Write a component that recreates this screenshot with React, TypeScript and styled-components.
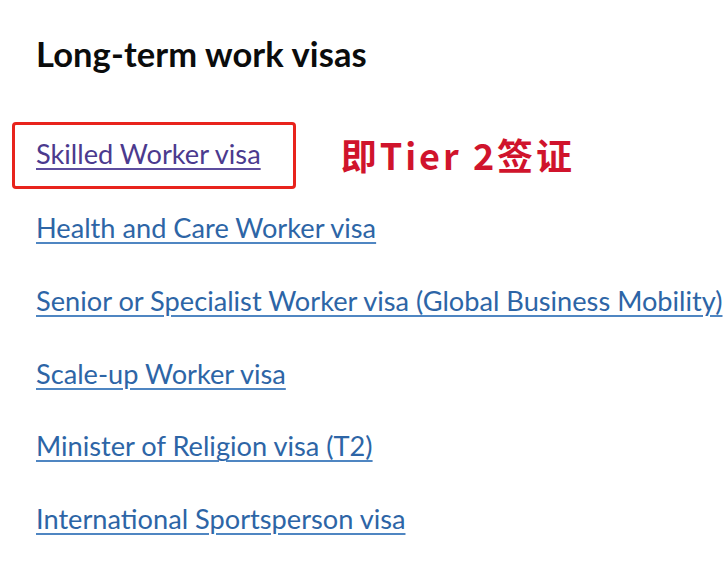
import React from "react";
import styled, { createGlobalStyle } from "styled-components";

const GlobalStyle = createGlobalStyle`
  html, body { margin: 0; padding: 0; background: #ffffff; }
  body { font-family: "Lato", "Liberation Sans", sans-serif; }
`;

const Page = styled.main`
  padding: 33px 0 0 36px;
  width: 727px;
  height: 577px;
  box-sizing: border-box;
  overflow: hidden;
`;

const Heading = styled.h2`
  margin: 0;
  font-family: "Lato", "Liberation Sans", sans-serif;
  font-weight: 700;
  font-size: 34.5px;
  line-height: 41px;
  color: #0b0c0c;
  letter-spacing: 0.1px;
`;

const List = styled.ul`
  list-style: none;
  margin: 62px 0 0;
  padding: 0;
  display: flex;
  flex-direction: column;
  gap: 40.3px;
`;

const Item = styled.li`
  display: flex;
  align-items: center;
  font-size: 27.2px;
  line-height: 32.4px;
  white-space: nowrap;
`;

const Link = styled.a<{ $visited?: boolean }>`
  font-family: "Lato", "Liberation Sans", sans-serif;
  color: ${(p) => (p.$visited ? "#4b3a8e" : "#2d65a6")};
  text-decoration: underline;
  text-decoration-thickness: 2px;
  text-underline-offset: 4px;
  text-decoration-color: ${(p) => (p.$visited ? "#5d4d9e" : "#4f86c2")};
  cursor: pointer;
`;

const Highlight = styled.span`
  display: inline-flex;
  align-items: center;
  margin: -16px 0 -19px -24px;
  padding: 13px 32px 16px 21px;
  border: 3px solid #e8231c;
  border-radius: 4px;
`;

const Note = styled.span`
  margin-left: 45px;
  font-family: "Noto Sans CJK SC", "Noto Sans", sans-serif;
  font-weight: 700;
  font-size: 36px;
  line-height: 1;
  letter-spacing: 3px;
  color: #d0142c;
`;

const visas = [
  "Health and Care Worker visa",
  "Senior or Specialist Worker visa (Global Business Mobility)",
  "Scale-up Worker visa",
  "Minister of Religion visa (T2)",
  "International Sportsperson visa",
];

export default function App() {
  return (
    <>
      <GlobalStyle />
      <Page>
        <Heading>Long-term work visas</Heading>
        <List>
          <Item>
            <Highlight>
              <Link $visited>Skilled Worker visa</Link>
            </Highlight>
            <Note>即Tier 2签证</Note>
          </Item>
          {visas.map((v) => (
            <Item key={v}>
              <Link>{v}</Link>
            </Item>
          ))}
        </List>
      </Page>
    </>
  );
}
